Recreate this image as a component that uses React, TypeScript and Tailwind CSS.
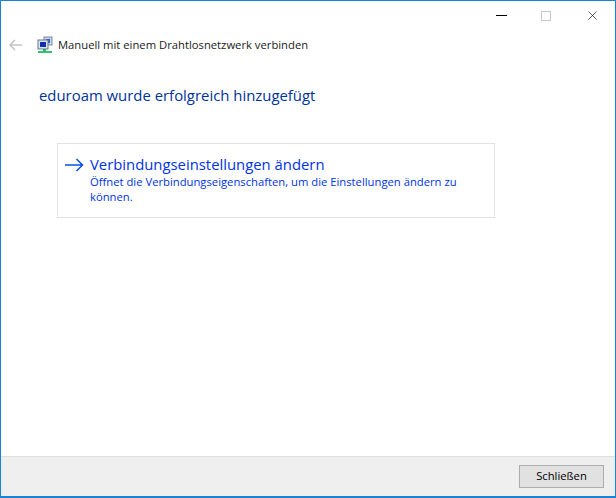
import { X } from "lucide-react"

function NetworkIcon() {
  return (
    <svg width="16" height="18" viewBox="0 0 16 18">
      <rect x="7" y="1" width="8" height="8" fill="#c9d6ea" stroke="#7b8aa6" />
      <rect x="9" y="3" width="4" height="4" fill="#2f62c8" />
      <rect x="1" y="4" width="10" height="9" fill="#dfe6f2" stroke="#66738c" />
      <rect x="3" y="6" width="6" height="5" fill="#0f2fa8" />
      <rect x="6" y="13" width="3" height="3" fill="#2fae5e" />
      <rect x="1" y="15" width="14" height="2" fill="#35c26f" />
    </svg>
  )
}

export default function App() {
  return (
    <div className="w-[616px] h-[498px] flex flex-col bg-white border border-[#1883d7] border-b-2 font-['Open_Sans','Noto_Sans',sans-serif] overflow-hidden">
      <div className="h-[29px] flex justify-end items-center text-black">
        <div className="w-[11px] h-px bg-black mr-[34px]"></div>
        <div className="w-[10px] h-[10px] border border-[#c8c8c8] mr-[34px]"></div>
        <X size={15} strokeWidth={1} className="mr-[15px]" />
      </div>
      <div className="flex items-center h-[30px] pl-[7px]">
        <svg width="16" height="14" viewBox="0 0 16 14" fill="none" stroke="#c4c4c4" strokeWidth="1.6">
          <path d="M14 7H2M7 2 2 7l5 5" />
        </svg>
        <div className="ml-[13px]"><NetworkIcon /></div>
        <span className="ml-[5px] text-[11.25px] text-[#1a1a1a]">Manuell mit einem Drahtlosnetzwerk verbinden</span>
      </div>
      <div className="flex-1 pl-[38px] pt-[24px]">
        <h1 className="text-[14.9px] leading-[22px] text-[#003399]">eduroam wurde erfolgreich hinzugefügt</h1>
        <div className="mt-[37px] ml-[18px] w-[438px] h-[75px] border border-[#e2e2e2] flex pt-[10px] pl-[7px]">
          <svg width="19" height="14" viewBox="0 0 19 14" fill="none" stroke="#0a4fe8" strokeWidth="1.5" className="mt-[4px] shrink-0">
            <path d="M0 7h17.5M11.5 1l6 6-6 6" />
          </svg>
          <div className="ml-[6px] text-[#0033e6]">
            <div className="text-[14.85px] leading-[20px]">Verbindungseinstellungen ändern</div>
            <div className="text-[11.25px] leading-[15px] w-[385px]">Öffnet die Verbindungseigenschaften, um die Einstellungen ändern zu können.</div>
          </div>
        </div>
      </div>
      <div className="h-[40px] bg-[#efefef] border-t border-[#dfdfdf] flex justify-end items-center pr-[11px]">
        <button className="w-[85px] h-[23px] bg-[#e1e1e1] border border-[#adadad] text-[11.25px] text-black">Schließen</button>
      </div>
    </div>
  )
}
